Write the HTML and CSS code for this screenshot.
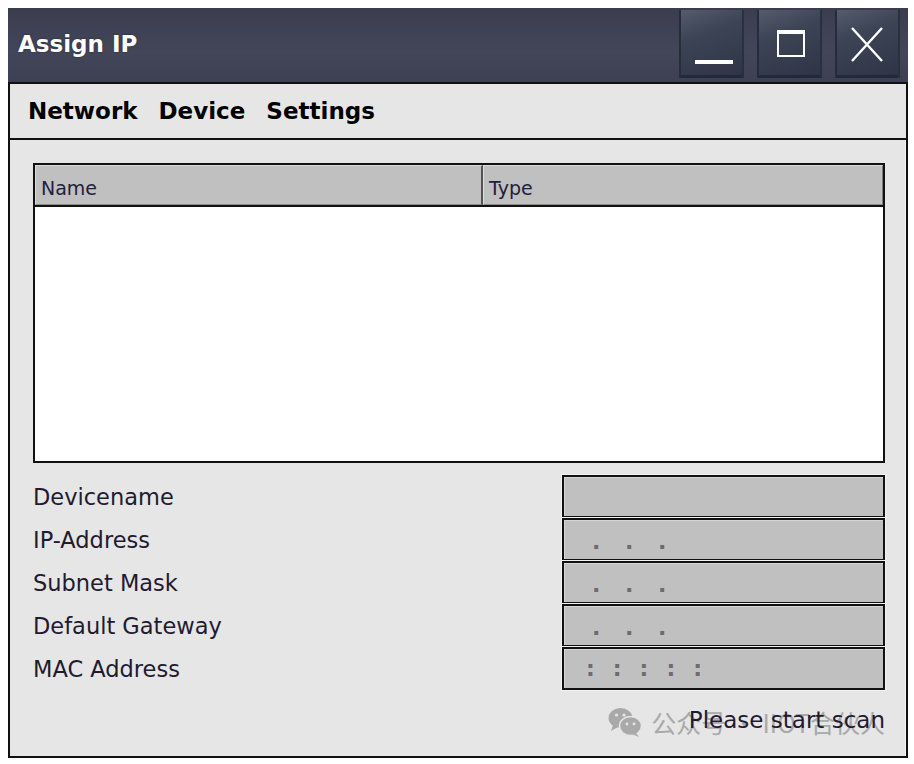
FILE: index.html
```html
<!DOCTYPE html>
<html lang="en">
<head>
  <meta charset="UTF-8" />
  <title>Assign IP</title>
  <link rel="stylesheet" href="styles.css">
</head>
<body>
  <div class="window">
    <!-- Title bar -->
    <div class="titlebar">
      <span class="title">Assign IP</span>
      <div class="controls">
        <button class="ctl" title="Minimize">
          <svg width="65" height="68" viewBox="0 0 65 68"><rect x="16" y="50" width="38" height="4" fill="#fff"/></svg>
        </button>
        <button class="ctl" title="Maximize">
          <svg width="65" height="68" viewBox="0 0 65 68"><rect x="21" y="21" width="26" height="25" fill="none" stroke="#fff" stroke-width="2"/><rect x="20" y="20" width="28" height="4" fill="#fff"/></svg>
        </button>
        <button class="ctl" title="Close">
          <svg width="65" height="68" viewBox="0 0 65 68"><path d="M17 18 L47 51 M47 18 L17 51" stroke="#fff" stroke-width="2.4" fill="none"/></svg>
        </button>
      </div>
    </div>

    <!-- Menu -->
    <div class="menubar">
      <span>Network</span>
      <span>Device</span>
      <span>Settings</span>
    </div>

    <div class="content">
      <!-- Device list -->
      <div class="grid">
        <div class="thead">
          <div class="th th-name">Name</div>
          <div class="th th-type">Type</div>
        </div>
        <div class="tbody"></div>
      </div>

      <!-- Device properties -->
      <div class="props">
        <label>Devicename</label>
        <div class="field"></div>
        <label>IP-Address</label>
        <div class="field ip"><span>.</span><span>.</span><span>.</span></div>
        <label>Subnet Mask</label>
        <div class="field ip"><span>.</span><span>.</span><span>.</span></div>
        <label>Default Gateway</label>
        <div class="field ip"><span>.</span><span>.</span><span>.</span></div>
        <label>MAC Address</label>
        <div class="field mac"><span>:</span><span>:</span><span>:</span><span>:</span><span>:</span></div>
      </div>

      <div class="status">
        <div class="watermark">
          <svg width="34" height="30" viewBox="0 0 34 30">
            <ellipse cx="12.5" cy="11" rx="12" ry="10" fill="#a9a9a9"/>
            <path d="M5 18 L3 24 L10 20 Z" fill="#a9a9a9"/>
            <ellipse cx="22.5" cy="19" rx="11" ry="9.5" fill="#a9a9a9" stroke="#e6e6e6" stroke-width="1.5"/>
            <path d="M28 26 L31 30 L24 27 Z" fill="#a9a9a9"/>
            <circle cx="8.5" cy="8" r="1.6" fill="#e6e6e6"/>
            <circle cx="16" cy="8" r="1.6" fill="#e6e6e6"/>
            <circle cx="19" cy="17" r="1.4" fill="#e6e6e6"/>
            <circle cx="26" cy="17" r="1.4" fill="#e6e6e6"/>
          </svg>
          <span>公众号 · IIOT合伙人</span>
        </div>
        <span class="status-text">Please start scan</span>
      </div>
    </div>
  </div>
</body>
</html>
```

FILE: styles.css
```css
* {
  box-sizing: border-box;
}

body {
  margin: 0;
  padding: 8px;
  background: #fff;
  font-family: "DejaVu Sans", Verdana, sans-serif;
  color: #221a30;
}

.window {
  width: 900px;
}

/* Title bar */
.titlebar {
  height: 74px;
  display: flex;
  justify-content: space-between;
  align-items: flex-start;
  background: linear-gradient(to bottom, #3b3d4f, #434659 60%, #3d3f52);
}

.title {
  margin-left: 10px;
  line-height: 72px;
  font-size: 23px;
  font-weight: bold;
  color: #fff;
  text-shadow: 0 0 2px rgba(0, 0, 0, 0.5);
}

.controls {
  display: flex;
  gap: 13px;
  padding: 2px 8px 0 0;
}

.ctl {
  width: 65px;
  height: 68px;
  padding: 0;
  border: none;
  background: linear-gradient(160deg, #565c6c 0%, #3c4456 35%, #2c3446 100%);
  box-shadow: inset 2px 0 0 #262c3a, inset -2px 0 0 #2a303e, inset 0 -3px 0 #232936;
}

.ctl svg {
  display: block;
}

/* Menu */
.menubar {
  height: 58px;
  display: flex;
  align-items: center;
  gap: 21px;
  padding-left: 18px;
  background: #e6e6e6;
  border: 2px solid #111;
  font-size: 23px;
  font-weight: bold;
  color: #000;
}

/* Content */
.content {
  height: 618px;
  padding: 23px 21px 0 23px;
  background: #e6e6e6;
  border-left: 2px solid #111;
  border-right: 2px solid #111;
  border-bottom: 2px solid #111;
  box-shadow: inset -1px 0 0 #f4f4f4;
}

.grid {
  height: 300px;
  border: 2px solid #111;
  display: flex;
  flex-direction: column;
  background: #fff;
}

.thead {
  display: flex;
  height: 42px;
  border-bottom: 2px solid #111;
  background: #c0c0c0;
}

.th {
  height: 40px;
  line-height: 36px;
  padding: 4px 0 0 5px;
  font-size: 19px;
  color: #202040;
  border-top: 1px solid #dcdcdc;
  border-left: 1px solid #dcdcdc;
  border-right: 1px solid #7c7c7c;
  border-bottom: 1px solid #8a8a8a;
}

.th-name {
  width: 448px;
  border-right: 2px solid #555;
}

.th-type {
  flex: 1;
}

.tbody {
  flex: 1;
}

.props {
  display: grid;
  grid-template-columns: 1fr 323px;
  grid-auto-rows: 43px;
  align-items: center;
  margin-top: 12px;
}

.props label {
  font-size: 22.5px;
}

.field {
  height: 43px;
  background: #c0c0c0;
  border: 2px solid #111;
  box-shadow: inset 1px 1px 0 #d6d6d6, 0 0 0 1px #f2f2f2;
  display: flex;
  align-items: flex-end;
  font-size: 22px;
  font-weight: bold;
  line-height: 22px;
  color: #6f6a70;
}

.ip {
  padding: 0 0 6px 28px;
}

.ip span {
  width: 33px;
}

.mac {
  padding: 0 0 8px 22px;
}

.mac span {
  width: 26.8px;
}

.status {
  position: relative;
  display: flex;
  justify-content: flex-end;
  margin-top: 17px;
  line-height: 26px;
  font-size: 23px;
}

.status-text {
  position: relative;
}

.watermark {
  position: absolute;
  right: 0;
  top: 0;
  display: flex;
  align-items: center;
  gap: 9px;
  font-family: "Noto Sans CJK SC", "DejaVu Sans", sans-serif;
  font-size: 25px;
  line-height: 26px;
  color: #a9a9a9;
  white-space: nowrap;
}
```
